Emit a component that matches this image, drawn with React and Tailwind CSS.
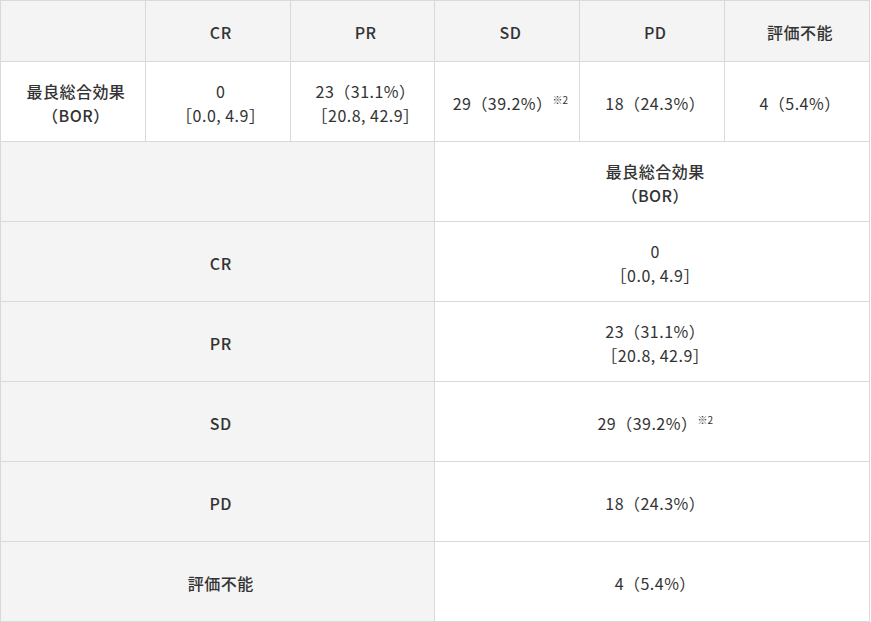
const font = { fontFamily: '"Noto Sans CJK JP", "Noto Sans", sans-serif' }

function Note() {
  return <sup className="ml-0 text-[10px] tracking-normal align-[1px]">※2</sup>
}

const bor = (
  <>
    最良総合効果
    <br />
    （BOR）
  </>
)

const rows = [
  ['CR', <>0<br />［0.0, 4.9］</>],
  ['PR', <>23（31.1%）<br />［20.8, 42.9］</>],
  ['SD', <>29（39.2%）<Note /></>],
  ['PD', '18（24.3%）'],
  ['評価不能', '4（5.4%）'],
]

export default function App() {
  const base = 'border border-[#d9d9d9] text-center align-middle pl-[6px] pt-[2px]'
  const th = base + ' bg-[#f4f4f4] font-medium'
  const td = base + ' bg-white font-normal'
  return (
    <div className="bg-white min-h-screen text-[#333] text-[16px] leading-6 tracking-[0.03em]" style={font}>
      <table className="w-[870px] border-collapse table-fixed">
        <tbody>
          <tr className="h-[61px]">
            <th className={th}></th>
            {['CR', 'PR', 'SD', 'PD', '評価不能'].map((h) => (
              <th key={h} className={th}>{h}</th>
            ))}
          </tr>
          <tr className="h-[80px]">
            <th className={base + ' bg-white font-medium'}>{bor}</th>
            {rows.map(([k, v]) => (
              <td key={k} className={td}>{v}</td>
            ))}
          </tr>
          <tr className="h-[80px]">
            <th colSpan={3} className={th}></th>
            <th colSpan={3} className={base + ' bg-white font-medium'}>{bor}</th>
          </tr>
          {rows.map(([k, v]) => (
            <tr key={k} className="h-[80px]">
              <th colSpan={3} className={th}>{k}</th>
              <td colSpan={3} className={td}>{v}</td>
            </tr>
          ))}
        </tbody>
      </table>
    </div>
  )
}
